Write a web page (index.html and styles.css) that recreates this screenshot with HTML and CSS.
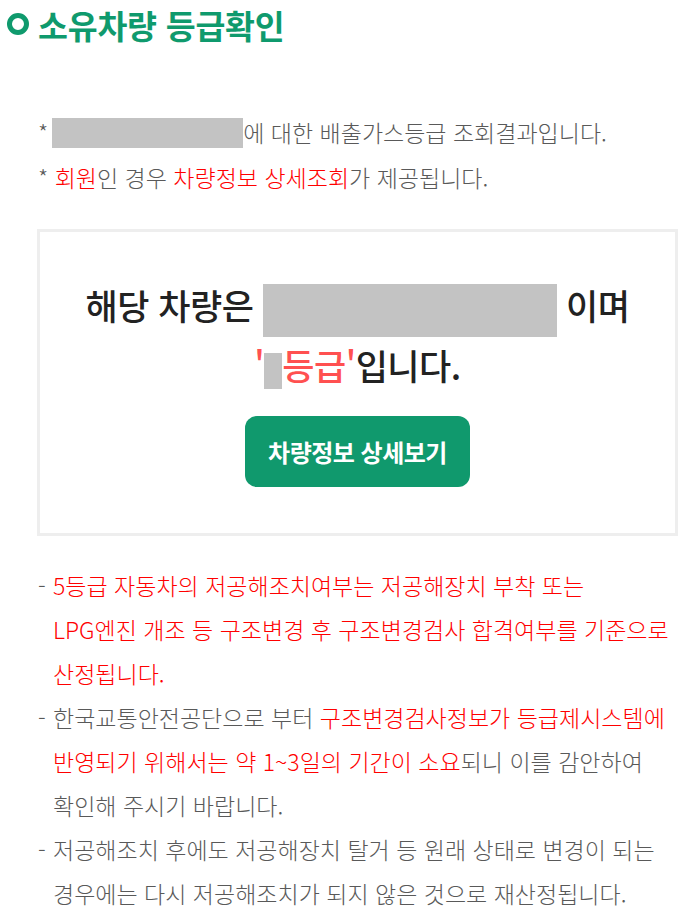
FILE: index.html
```html
<!DOCTYPE html>
<html lang="ko">
<head>
    <meta charset="UTF-8">
    <meta name="viewport" content="width=device-width, initial-scale=1.0">
    <title>소유차량 등급확인</title>
    <link rel="stylesheet" href="styles.css">
</head>
<body>

    <!-- 제목 -->
    <h1 class="page-title"><span class="title-dot"></span>소유차량 등급확인</h1>

    <!-- 안내 문구 -->
    <div class="intro">
        <p>*<span class="mask mask-car"></span>에 대한 배출가스등급 조회결과입니다.</p>
        <p>* <span class="red">회원</span>인 경우 <span class="red">차량정보 상세조회</span>가 제공됩니다.</p>
    </div>

    <!-- 결과 박스 -->
    <div class="result-box">
        <p class="result-text">
            해당 차량은 <span class="mask mask-num"></span> 이며<br>
            <span class="grade">'<span class="mask mask-grade"></span>등급'</span>입니다.
        </p>
        <button class="detail-btn">차량정보 상세보기</button>
    </div>

    <!-- 유의사항 -->
    <ul class="notes">
        <li class="red">5등급 자동차의 저공해조치여부는 저공해장치 부착 또는<br>LPG엔진 개조 등 구조변경 후 구조변경검사 합격여부를 기준으로 산정됩니다.</li>
        <li>한국교통안전공단으로 부터 <span class="red">구조변경검사정보가 등급제시스템에</span> <span class="red">반영되기 위해서는 약 1~3일의 기간이 소요</span>되니 이를 감안하여 확인해 주시기 바랍니다.</li>
        <li>저공해조치 후에도 저공해장치 탈거 등 원래 상태로 변경이 되는 경우에는 다시 저공해조치가 되지 않은 것으로 재산정됩니다.</li>
    </ul>

</body>
</html>
```

FILE: styles.css
```css
body {
    font-family: "Noto Sans CJK KR", "Noto Sans", sans-serif;
    background-color: #fff;
    margin: 0;
    padding: 0;
    color: #595959;
    word-break: keep-all;
}

.page-title {
    display: flex;
    align-items: center;
    margin: 0;
    padding: 0 0 0 7px;
    height: 48px;
    font-size: 32.5px;
    font-weight: 700;
    color: #0f9a6d;
    letter-spacing: -0.2px;
}

.title-dot {
    flex: none;
    width: 12px;
    height: 12px;
    border: 5px solid #0f9a6d;
    border-radius: 50%;
    margin-right: 9px;
}

.intro {
    margin: 62px 0 0 38px;
    font-size: 23px;
    font-weight: 300;
    color: #595959;
}

.intro p {
    margin: 0;
    line-height: 45px;
}

.red {
    color: #f00;
}

.mask {
    display: inline-block;
    background-color: #c3c3c3;
    vertical-align: middle;
}

.mask-car {
    width: 191px;
    height: 30px;
    margin: -6px 0 0 4px;
}

.result-box {
    margin: 29px 18px 0 37px;
    border: 3px solid #eee;
    height: 307px;
    box-sizing: border-box;
    text-align: center;
}

.result-text {
    margin: 45px 0 0;
    font-size: 35px;
    font-weight: 500;
    color: #222;
    line-height: 55px;
    letter-spacing: -0.5px;
}

.mask-num {
    width: 294px;
    height: 53px;
}

.grade {
    color: #ff5050;
}

.mask-grade {
    width: 18px;
    height: 36px;
}

.detail-btn {
    display: block;
    margin: 24px auto 0;
    width: 225px;
    height: 71px;
    border: none;
    border-radius: 12px;
    background-color: #10996d;
    color: #fff;
    font-family: inherit;
    font-size: 24px;
    font-weight: 700;
    letter-spacing: -0.5px;
    cursor: pointer;
}

.notes {
    list-style: none;
    margin: 27px 0 0 38px;
    padding: 0 14px 0 0;
    font-size: 23px;
    font-weight: 300;
    line-height: 44px;
    color: #595959;
}

.notes li {
    position: relative;
    padding-left: 15px;
}

.notes li::before {
    content: "-";
    position: absolute;
    left: 0;
    color: #595959;
}
```
